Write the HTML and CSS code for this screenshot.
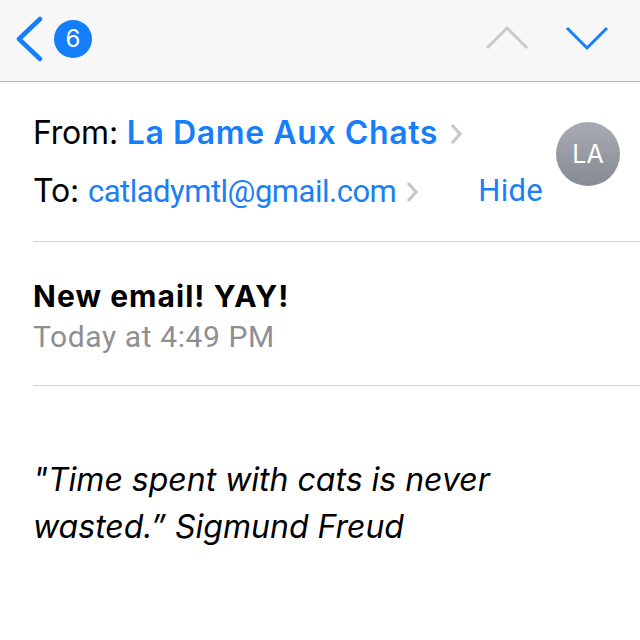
FILE: index.html
```html
<!DOCTYPE html>
<html>
<head>
<meta charset="utf-8">
<link rel="stylesheet" href="styles.css">
</head>
<body>
<header class="topbar">
  <div class="back">
    <svg class="back-chev" width="30" height="46" viewBox="0 0 30 46"><polyline points="26,3 5,23 26,43" fill="none" stroke="#157efb" stroke-width="4.5" stroke-linecap="round" stroke-linejoin="round"/></svg>
    <span class="badge">6</span>
  </div>
  <div class="nav">
    <svg width="44" height="26" viewBox="0 0 44 26"><polyline points="2,23 22,3 42,23" fill="none" stroke="#c9c9cc" stroke-width="3"/></svg>
    <svg width="44" height="26" viewBox="0 0 44 26"><polyline points="2,3 22,23 42,3" fill="none" stroke="#157efb" stroke-width="3"/></svg>
  </div>
</header>
<section class="meta">
  <div class="meta-lines">
    <div class="row"><span class="label">From: </span><span class="from">La Dame Aux Chats</span><svg class="gt gt-from" width="14" height="22" viewBox="0 0 14 22"><polyline points="3,2 11,11 3,20" fill="none" stroke="#c7c7cc" stroke-width="3.2"/></svg></div>
    <div class="row to-row"><span class="to-left"><span class="label label-to">To:</span><span class="to">catladymtl@gmail.com</span><svg class="gt" width="14" height="22" viewBox="0 0 14 22"><polyline points="3,2 11,11 3,20" fill="none" stroke="#c7c7cc" stroke-width="3.2"/></svg></span><span class="hide">Hide</span></div>
  </div>
  <div class="avatar">LA</div>
</section>
<div class="sep sep-meta"></div>
<section class="subject-block">
  <div class="subject">New email! YAY!</div>
  <div class="date">Today at 4:49 PM</div>
</section>
<div class="sep"></div>
<section class="body-text">
  <p class="quote">"Time spent with cats is never wasted.” Sigmund Freud</p>
</section>
</body>
</html>
```
FILE: styles.css
```css
html, body {
  margin: 0;
  padding: 0;
  background: #ffffff;
  font-family: Inter, Roboto, "Liberation Sans", sans-serif;
  color: #000;
}
.topbar {
  height: 81px;
  background: #f7f7f7;
  border-bottom: 1px solid #b4b4b4;
  display: flex;
  align-items: center;
  justify-content: space-between;
  padding: 0 31px 0 14px;
}
.back {
  display: flex;
  align-items: center;
  margin-top: -3px;
}
.back-chev {
  display: block;
}
.badge {
  width: 38px;
  height: 38px;
  border-radius: 50%;
  background: #157efb;
  color: #fff;
  font-size: 24px;
  line-height: 38px;
  text-align: center;
  margin-left: 10px;
}
.nav {
  display: flex;
  gap: 36px;
  margin-top: -6px;
}
.nav svg { display: block; }
.meta {
  display: flex;
  padding: 24px 20px 0 33px;
}
.meta-lines {
  flex: 1;
}
.row {
  font-size: 32px;
  line-height: 54px;
  height: 54px;
  white-space: pre;
}
.label {
  letter-spacing: -0.2px;
}
.label-to {
  margin-right: 9px;
}
.from {
  color: #157efb;
  font-weight: 600;
  letter-spacing: 0.6px;
}
.to {
  font-family: Roboto, "Liberation Sans", sans-serif;
  font-size: 31px;
  color: #1a80f5;
  letter-spacing: -0.5px;
}
.gt {
  margin-left: 9px;
  vertical-align: -1px;
}
.gt-from {
  margin-left: 11px;
}
.to-row {
  display: flex;
  justify-content: space-between;
  margin-top: 4px;
}
.to-left {
  white-space: pre;
}
.hide {
  font-family: Roboto, "Liberation Sans", sans-serif;
  font-size: 31px;
  color: #1a80f5;
  letter-spacing: 0.3px;
}
.avatar {
  width: 64px;
  height: 64px;
  border-radius: 50%;
  background: linear-gradient(#a8abb2, #868a93);
  color: #fff;
  font-size: 25px;
  line-height: 64px;
  text-align: center;
  margin-left: 13px;
  margin-top: 16px;
}
.sep {
  height: 1px;
  background: #d2d2d2;
  margin-left: 33px;
}
.sep-meta {
  margin-top: 23px;
}
.subject-block {
  padding: 35px 0 29px 33px;
}
.subject {
  font-size: 30px;
  font-weight: 700;
  line-height: 39px;
  letter-spacing: 1.05px;
}
.date {
  font-family: Roboto, "Liberation Sans", sans-serif;
  font-size: 30px;
  line-height: 39px;
  margin-top: 1px;
  color: #8e8e93;
  letter-spacing: 0.6px;
}
.body-text {
  padding: 70px 90px 0 33px;
}
.quote {
  margin: 0;
  font-size: 32px;
  font-style: italic;
  line-height: 47px;
}
```
